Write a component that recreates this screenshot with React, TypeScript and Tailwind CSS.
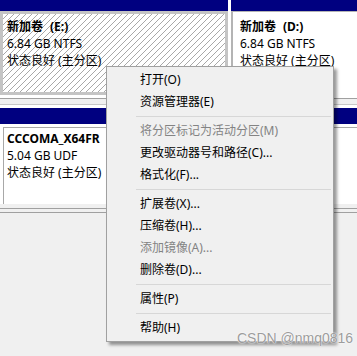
const menuItems: ({ label: string; disabled?: boolean } | "sep")[] = [
  { label: "打开(O)" },
  { label: "资源管理器(E)" },
  "sep",
  { label: "将分区标记为活动分区(M)", disabled: true },
  { label: "更改驱动器号和路径(C)..." },
  { label: "格式化(F)..." },
  "sep",
  { label: "扩展卷(X)..." },
  { label: "压缩卷(H)..." },
  { label: "添加镜像(A)...", disabled: true },
  { label: "删除卷(D)..." },
  "sep",
  { label: "属性(P)" },
  "sep",
  { label: "帮助(H)" },
];

function VolumeText({ name, letter, size }: { name: string; letter?: string; size: string }) {
  return (
    <div className="text-[12px] leading-[17px] text-black whitespace-nowrap">
      <div className="font-bold">
        {name}
        {letter && <span className="ml-[7px]">{letter}</span>}
      </div>
      <div>{size}</div>
      <div>状态良好 (主分区)</div>
    </div>
  );
}

export default function App() {
  return (
    <div className="relative w-[357px] h-[356px] overflow-hidden bg-[#f0f0f0] font-['Noto_Sans','Noto_Sans_CJK_SC',sans-serif]">
      {/* Disk 0 */}
      <div className="flex h-[95px] bg-white">
        <div className="w-[228px] flex flex-col">
          <div className="h-[11px] bg-[#000080]" />
          <div className="flex-1 border-[3px] border-[#c4c4c4] pl-[4px] pt-[4px] bg-[repeating-linear-gradient(135deg,#ffffff_0px,#ffffff_3.3px,#a8a8a8_3.3px,#a8a8a8_4.24px)]">
            <VolumeText name="新加卷" letter="(E:)" size="6.84 GB NTFS" />
          </div>
        </div>
        <div className="w-[3px]" />
        <div className="flex-1 flex flex-col">
          <div className="h-[11px] bg-[#000080]" />
          <div className="flex-1 border-l-2 border-t border-[#b4b4b4] pl-[7px] pt-[6px] overflow-hidden">
            <VolumeText name="新加卷" letter="(D:)" size="6.84 GB NTFS" />
          </div>
        </div>
      </div>

      <div className="h-[3px] bg-white" />
      <div className="h-px bg-[#a0a0a0]" />
      <div className="h-[5px] bg-[#f0f0f0]" />
      <div className="h-px bg-[#c8c8c8]" />
      <div className="h-[3px] bg-white" />

      {/* Disk 1 (CD-ROM), partly hidden by the menu */}
      <div className="h-[16px] bg-[#000080]" />
      <div className="h-[3px] bg-white" />
      <div className="flex h-[77px] bg-white">
        <div className="w-[3px]" />
        <div className="flex-1 border-l border-t border-[#a8a8a8] pl-[3px] pt-[2px]">
          <VolumeText name="CCCOMA_X64FR" size="5.04 GB UDF" />
        </div>
      </div>
      <div className="h-[4px]" />
      <div className="h-px bg-[#a0a0a0]" />
      <div className="h-[3px]" />
      <div className="h-px bg-[#a0a0a0]" />

      {/* Context menu */}
      <div className="absolute left-[106px] top-[66px] w-[228px] border border-[#a0a0a0] bg-[#f0f0f0] py-[2px] shadow-[3px_3px_3px_rgba(0,0,0,0.4)]">
        {menuItems.map((item, i) =>
          item === "sep" ? (
            <div key={i} className="h-[7px] pt-[3px] pl-[29px] pr-[2px]">
              <div className="h-px bg-[#d7d7d7]" />
            </div>
          ) : (
            <div
              key={i}
              className={`h-[22px] pl-[33px] flex items-center text-[12px] whitespace-nowrap ${item.disabled ? "text-[#838383]" : "text-black"}`}
            >
              {item.label}
            </div>
          )
        )}
      </div>

      {/* Watermark */}
      <div className="absolute left-[237px] top-[329px] text-[14px] leading-[18px] text-[#9c9c9c] font-['Liberation_Sans',sans-serif] [text-shadow:0_0_2px_#ffffff,0_0_1px_#ffffff]">
        CSDN @nmq0816
      </div>
    </div>
  );
}
